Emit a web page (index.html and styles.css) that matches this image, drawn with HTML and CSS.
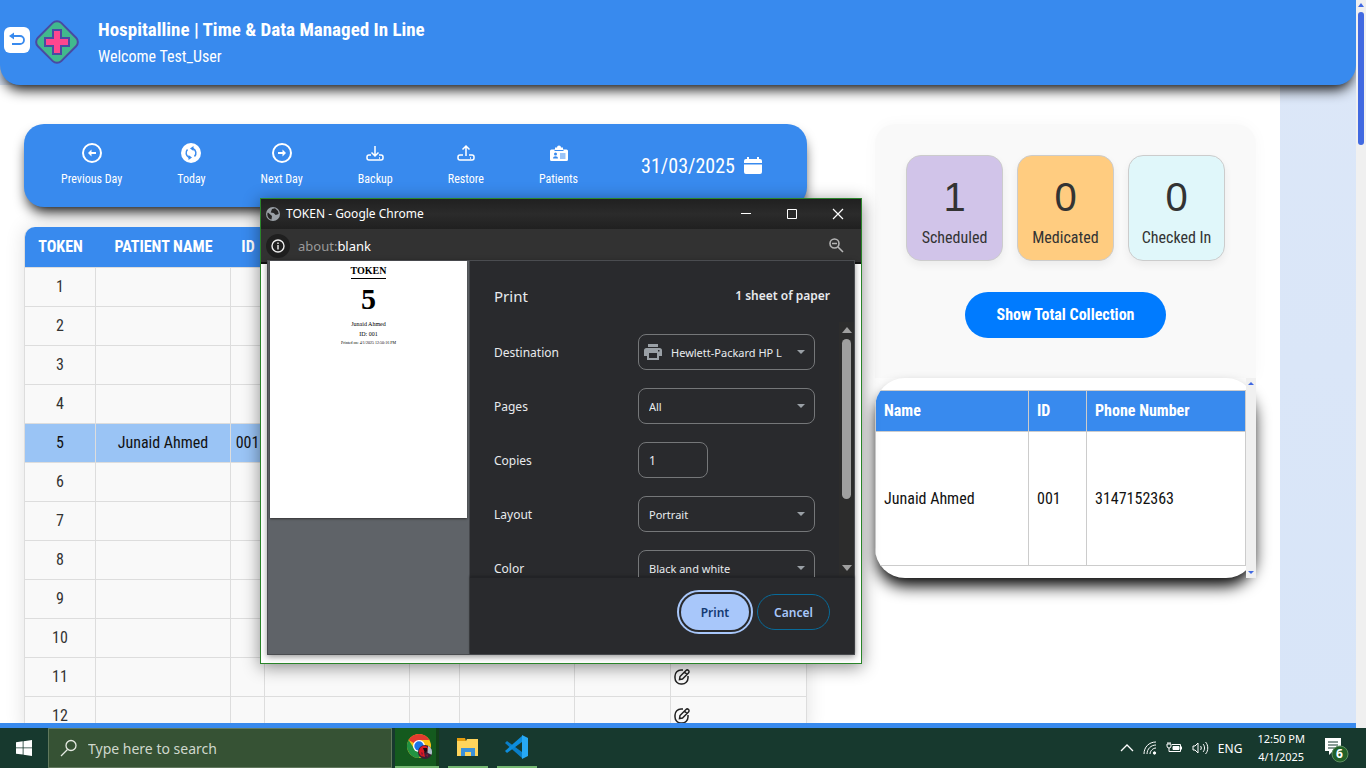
FILE: index.html
```html
<!DOCTYPE html>
<html lang="en">
<head>
<meta charset="utf-8">
<title>Hospitalline</title>
<link rel="stylesheet" href="styles.css">
</head>
<body>
<div class="screen">
  <div class="viewport">
    <div class="page">
      <header class="header">
        <button class="back" type="button" aria-label="Back">
          <svg width="26" height="26" viewBox="0 0 26 26" fill="none" stroke="#388aee" stroke-width="1.800"><path d="M9 9h7a4 4 0 0 1 0 8H8"/><path d="M10 5.500 5 9l5 3.500z" fill="#388aee" stroke="none"/></svg>
        </button>
        <svg class="logo" width="46" height="46" viewBox="0 0 46 46"><rect x="6.500" y="6.500" width="33" height="33" rx="6" transform="rotate(45 23 23)" fill="#41b98d" stroke="#494aa3" stroke-width="2"/><path d="M19 11h8v8h8v8h-8v8h-8v-8h-8v-8h8z" fill="#ff468f" stroke="#494aa3" stroke-width="2"/></svg>
        <div class="titles"><h1>Hospitalline | Time &amp; Data Managed In Line</h1><p>Welcome Test_User</p></div>
      </header>
      <main class="main">
        <section class="left">
          <nav class="toolbar">
            <button type="button"><svg width="24" height="24" viewBox="0 0 24 24" fill="none" stroke="#fff" stroke-width="2"><circle cx="12" cy="12" r="9"/><path d="M16 12H9"/><path d="M11.500 8.500 8 12l3.500 3.500z" fill="#fff" stroke="none"/></svg>Previous Day</button>
            <button type="button"><svg width="24" height="24" viewBox="0 0 24 24"><circle cx="12" cy="12" r="10" fill="#fff"/><path d="M10 16.500A5 5 0 0 1 8.500 8.500M14 7.500a5 5 0 0 1 1.500 8" fill="none" stroke="#388aee" stroke-width="1.500"/><path d="m14.500 5-3.500 2.500 3.500 2.500zM9.500 14l3.500 2.500L9.500 19z" fill="#388aee"/></svg>Today</button>
            <button type="button"><svg width="24" height="24" viewBox="0 0 24 24" fill="none" stroke="#fff" stroke-width="2"><circle cx="12" cy="12" r="9"/><path d="M8 12h7"/><path d="M12.500 8.500 16 12l-3.500 3.500z" fill="#fff" stroke="none"/></svg>Next Day</button>
            <button type="button"><svg width="24" height="24" viewBox="0 0 24 24" fill="none" stroke="#fff" stroke-width="1.500"><path d="M12 5v10M8.500 11.500 12 15l3.500-3.500M8 14H6a2 2 0 0 0-2 2v1a2 2 0 0 0 2 2h12a2 2 0 0 0 2-2v-1a2 2 0 0 0-2-2h-2M16 17h1"/></svg>Backup</button>
            <button type="button"><svg width="24" height="24" viewBox="0 0 24 24" fill="none" stroke="#fff" stroke-width="1.500"><path d="M12 15V5M8.500 8.500 12 5l3.500 3.500M9 14H6a2 2 0 0 0-2 2v1a2 2 0 0 0 2 2h12a2 2 0 0 0 2-2v-1a2 2 0 0 0-2-2h-3M16 17h1"/></svg>Restore</button>
            <button type="button"><svg width="24" height="24" viewBox="0 0 24 24"><path d="M4.500 8.500H8V10h8V8.500h3.500A1.500 1.500 0 0 1 21 10v8.500a1.500 1.500 0 0 1-1.500 1.500h-15A1.500 1.500 0 0 1 3 18.500V10a1.500 1.500 0 0 1 1.500-1.500zM10 6.500a2 2 0 0 1 4 0h2V9H8V6.500z" fill="#fff"/><path d="M7.500 9.500h9" stroke="#388aee"/><circle cx="8.500" cy="13" r="1.500" fill="#388aee"/><path d="M6 17.500c0-3 5-3 5 0z" fill="#388aee"/><path d="M13 13h5.500M13 15h5.500M13 17h5.500" stroke="#388aee"/></svg>Patients</button>
            <button class="date" type="button">31/03/2025<svg width="18" height="18" viewBox="0 0 18 18" fill="#fff"><path d="M3 2V0h2v2h8V0h2v2h1a2 2 0 0 1 2 2v2H0V4a2 2 0 0 1 2-2zM0 7.500h18V15a2 2 0 0 1-2 2H2a2 2 0 0 1-2-2z"/></svg></button>
          </nav>
          <table class="tokens">
            <colgroup><col class="c1"><col class="c2"><col class="c3"><col class="c4"><col class="c5"><col class="c6"><col class="c7"><col class="c8"></colgroup>
            <thead><tr><th>TOKEN</th><th>PATIENT NAME</th><th>ID</th><th></th><th></th><th></th><th></th><th></th></tr></thead>
            <tbody id="rows"></tbody>
          </table>
        </section>
        <aside class="right">
          <div class="summary">
            <div class="stats">
              <div class="stat purple"><b>1</b><span>Scheduled</span></div>
              <div class="stat orange"><b>0</b><span>Medicated</span></div>
              <div class="stat cyan"><b>0</b><span>Checked In</span></div>
            </div>
            <button class="collect" type="button">Show Total Collection</button>
          </div>
          <div class="found-wrap">
            <div class="found">
              <table>
                <thead><tr><th class="f1">Name</th><th class="f2">ID</th><th>Phone Number</th></tr></thead>
                <tbody><tr><td>Junaid Ahmed</td><td>001</td><td>3147152363</td></tr></tbody>
              </table>
            </div>
            <div class="mini-scroll"><i class="up"></i><i class="down"></i></div>
          </div>
        </aside>
      </main>
      <div class="footer"></div>
    </div>
    <div class="scroll"><i class="up"></i><div class="thumb"></div></div>
  </div>

  <div class="taskbar">
    <button class="start" type="button" aria-label="Start"><svg width="16" height="16" viewBox="0 0 16 16" fill="#fff"><path d="M0 2.300 6.700 1.300v6.200H0zM7.500 1.200 16 0v7.500H7.500zM0 8.300h6.700v6.300L0 13.700zM7.500 8.300H16V16l-8.500-1.200z"/></svg></button>
    <label class="search"><svg width="18" height="18" viewBox="0 0 18 18" fill="none" stroke="#e5eae2" stroke-width="1.300"><circle cx="11" cy="6.500" r="5"/><path d="m7.500 10.500-6.500 6.500"/></svg><input type="text" placeholder="Type here to search" aria-label="Search"></label>
    <button class="app active" type="button" aria-label="Chrome"><svg width="28" height="28" viewBox="0 0 28 28"><circle cx="13" cy="13" r="12" fill="#fbc116"/><path d="M13 13 2.600 7A12 12 0 0 1 23.400 7H13z" fill="#e33b2e"/><path d="M2.600 7A12 12 0 0 0 13 25l5-9-9 1z" fill="#229342"/><circle cx="13" cy="13" r="6" fill="#fff"/><circle cx="13" cy="13" r="4.700" fill="#1a73e8"/><circle cx="19" cy="19" r="7" fill="#3b1f35"/><path d="M22 12.800a7 7 0 0 1 3.500 9l-4-2z" fill="#aebfca"/><path d="M13 20c-1-6 6-10 9-5l-1 3-3 1 1 5-4-1z" fill="#d81a24"/><path d="M17 15h4v3l-2 2z" fill="#180d12"/><path d="m15 19 2 1-1 3zM19 22l3-1v3z" fill="#7b1736"/></svg></button>
    <button class="app" type="button" aria-label="File Explorer"><svg width="24" height="24" viewBox="0 0 24 24"><path d="M1 3h8l1 3H1z" fill="#e59c0e"/><path d="M1 6h9l1-2h11v17H1z" fill="#ffd45c"/><path d="M5 13h14v8h-4v-4H9v4H5z" fill="#3c91d9"/></svg></button>
    <button class="app" type="button" aria-label="Visual Studio Code"><svg width="24" height="24" viewBox="0 0 24 24"><path d="M2 6 0 8l17 15v-6z" fill="#0a7fc9"/><path d="M2 18 0 16 17 1v6z" fill="#0d8ddd"/><path d="m17 0 6 3v18l-6 3z" fill="#27a9f5"/></svg></button>
    <div class="tray">
      <svg width="14" height="8" viewBox="0 0 14 8" fill="none" stroke="#fff" stroke-width="1.300"><path d="m1 7 6-6 6 6"/></svg>
      <svg width="14" height="14" viewBox="0 0 14 14" fill="none" stroke="#fff"><path d="M1 13C1 6 6 1 13 1M4 13c0-5 4-9 9-9M7 13c0-3 3-6 6-6"/><circle cx="11.500" cy="12" r="1.200" fill="#fff"/></svg>
      <svg width="17" height="12" viewBox="0 0 17 12" fill="none" stroke="#fff"><path d="M6 2.500h8.500v7H5M15.500 4.500v3M1 2h4v2a2 2 0 0 1-4 0zM2 2V0M4 2V0M3 6v3.500h3"/><path d="M7 4.500h6v3H7z" fill="#fff"/></svg>
      <svg width="17" height="14" viewBox="0 0 17 14" fill="none" stroke="#fff"><path d="M1 5h2l3-3v10L3 9H1zM8.500 5c1 1 1 3 0 4M11 3c2 2 2 6 0 8M13.500 1c3 3 3 9 0 12"/></svg>
      <span class="lang">ENG</span>
      <span class="clock">12:50 PM<br>4/1/2025</span>
      <span class="notes"><svg width="26" height="26" viewBox="0 0 26 26"><path d="M1 1h16v13H9l-4 4v-4H1z" fill="#fff"/><path d="M4 5h10M4 8h10M4 11h7" stroke="#17392e"/><circle cx="16" cy="17" r="8" fill="#226127" stroke="#5e8d62"/></svg><b>6</b></span>
    </div>
  </div>

  <div class="window">
    <div class="titlebar">
      <svg width="14" height="14" viewBox="0 0 14 14"><circle cx="7" cy="7" r="7" fill="#9aa0a6"/><path d="M2 5.500 6 9l-.5 3.500C2.500 12 .8 9 1.500 6zM6 2l3-.7 3 2.700.7 3-3 1-2-2-3-.5z" fill="#252525"/></svg>
      <span>TOKEN - Google Chrome</span>
      <button type="button" aria-label="Minimize"><svg width="12" height="12" viewBox="0 0 12 12"><path d="M1 5.500h10" stroke="#fff"/></svg></button>
      <button type="button" aria-label="Maximize"><svg width="12" height="12" viewBox="0 0 12 12"><path d="M1.500 1.500h9v9h-9z" fill="none" stroke="#fff"/></svg></button>
      <button type="button" aria-label="Close"><svg width="12" height="12" viewBox="0 0 12 12"><path d="m1 1 10 10M11 1 1 11" stroke="#fff" stroke-width="1.200"/></svg></button>
    </div>
    <div class="address">
      <span class="info"><svg width="14" height="14" viewBox="0 0 14 14" fill="none" stroke="#eee" stroke-width="1.400"><circle cx="7" cy="7" r="6"/><path d="M7 6v4.500M7 3.500v1.400"/></svg></span>
      <span class="url"><i>about:</i>blank</span>
      <svg width="15" height="15" viewBox="0 0 15 15" fill="none" stroke="#b5b5b5" stroke-width="1.600"><circle cx="5.500" cy="5.500" r="4.500"/><path d="M3 5.500h5M9 9l5 5"/></svg>
    </div>
    <div class="dialog">
      <div class="preview">
        <div class="sheet"><h2>TOKEN</h2><strong>5</strong><p>Junaid Ahmed</p><p>ID: 001</p><small>Printed on: 4/1/2025 12:50:16 PM</small></div>
      </div>
      <form class="settings">
        <div class="set-head"><span>Print</span><b>1 sheet of paper</b></div>
        <div class="set-body">
          <div class="fields">
            <div class="row"><label for="dest">Destination</label><span class="field"><svg class="printer" width="18" height="16" viewBox="0 0 18 16"><path d="M4 0h10v3H4zM2.500 4h13A2.500 2.500 0 0 1 18 6.500V12h-3v4H3v-4H0V6.500A2.500 2.500 0 0 1 2.500 4zM5 9v5h8V9zM14 6v1.500h1.500V6z" fill="#9aa0a6" fill-rule="evenodd"/></svg><select id="dest" class="withicon"><option>Hewlett-Packard HP LaserJet</option></select></span></div>
            <div class="row"><label for="pages">Pages</label><span class="field"><select id="pages"><option>All</option></select></span></div>
            <div class="row"><label for="copies">Copies</label><input id="copies" type="text" value="1"></div>
            <div class="row"><label for="layout">Layout</label><span class="field"><select id="layout"><option>Portrait</option></select></span></div>
            <div class="row"><label for="color">Color</label><span class="field"><select id="color"><option>Black and white</option></select></span></div>
          </div>
          <div class="set-scroll"><i class="up"></i><div class="thumb"></div><i class="down"></i></div>
        </div>
        <div class="actions"><button class="print" type="button">Print</button><button class="cancel" type="button">Cancel</button></div>
      </form>
    </div>
  </div>
</div>
<script src="app.js"></script>
</body>
</html>
```
FILE: styles.css
```css
* { box-sizing: border-box; }
body { margin: 0; font-family: "Roboto Condensed", "Liberation Sans Narrow", Roboto, sans-serif; font-size: 16px; color: #333; }
button, input, select { font: inherit; color: inherit; margin: 0; }
button { border: 0; padding: 0; background: none; }
h1, h2, p { margin: 0; }
svg { display: block; flex: none; }
.screen { position: relative; display: flex; flex-direction: column; height: 100vh; overflow: hidden; }
.viewport { flex: 1; min-height: 0; display: flex; }
.page { flex: 1; min-width: 0; display: flex; flex-direction: column; background: linear-gradient(#dce7f8, #d8e5f8); }
.up, .down { display: block; width: 0; height: 0; border: 4px solid transparent; }
.up { border-top: 0; border-bottom-color: #4169e1; }
.down { border-bottom: 0; border-top-color: #4169e1; }
.scroll { position: relative; width: 10px; background: #f0f0f0; display: flex; flex-direction: column; align-items: center; gap: 5px; padding-top: 3px; }
.scroll .up { border-width: 0 3px 4px; }
.scroll .thumb { width: 6px; height: 133px; border-radius: 3px; background: #4169e1; }

.header { flex: none; height: 85px; background: #388aee; border-radius: 0 0 20px 20px; box-shadow: 0 8px 14px -4px #000; display: flex; align-items: center; padding: 0 4px; color: #fff; position: relative; }
.back { width: 26px; height: 26px; border-radius: 6px; background: #fff; margin-bottom: 5px; }
.logo { margin-left: 4px; margin-bottom: 1px; }
.titles { margin-left: 18px; }
.titles h1 { font-size: 19px; line-height: 28px; font-weight: 700; }
.titles p { line-height: 26px; }

.main { flex: 1; min-height: 0; overflow: hidden; max-width: 1280px; background: #fff; padding: 39px 24px 0; display: grid; grid-template-columns: minmax(0, 783fr) minmax(0, 381fr); gap: 68px; }
.footer { flex: none; height: 5px; background: #388aee; position: relative; }
.toolbar { height: 83px; border-radius: 20px; background: #388aee; box-shadow: 0 8px 14px -4px #000; color: #fff; display: flex; align-items: center; justify-content: space-between; padding: 0 45px 2px 37px; font-size: 12px; position: relative; }
.toolbar button { display: flex; flex-direction: column; align-items: center; gap: 5px; line-height: 18px; }
.toolbar .date { flex-direction: row; font-size: 20px; gap: 9px; margin-left: 8px; padding-top: 2px; }

.left { min-width: 0; }
.tokens { width: 100%; margin-top: 20px; table-layout: fixed; border-spacing: 0; border-left: 1px solid #ddd; box-shadow: 0 0 20px rgba(0,0,0,.12); border-radius: 10px; background: #f9f9f9; text-align: center; }
.tokens th { height: 40px; padding: 0 0 2px; background: #388aee; color: #fff; white-space: nowrap; }
.tokens th:first-child { border-radius: 10px 0 0; }
.tokens td { height: 39px; padding: 0 0 2px; border-right: 1px solid #ddd; border-top: 1px solid #ddd; white-space: nowrap; }
.tokens .active td { background: #9ac4f5; color: #111; }
.tokens td:last-child { padding: 0 3px; }
.c1 { width: 71px; } .c2 { width: 135px; } .c3 { width: 34px; } .c4 { width: 145px; } .c5 { width: 50px; } .c6 { width: 115px; } .c7 { width: 96px; }

.summary { height: 254px; background: #f9f9f9; border-radius: 20px 20px 0 0; box-shadow: 0 0 15px rgba(0,0,0,.03); display: flex; flex-direction: column; align-items: center; padding-top: 31px; }
.stats { display: flex; gap: 14px; }
.stat { width: 97px; height: 106px; border: 1px solid #ccc; border-radius: 15px; box-shadow: 0 4px 8px rgba(0,0,0,.06); display: flex; flex-direction: column; align-items: center; padding-top: 17px; }
.stat b { font-family: "Liberation Sans", sans-serif; font-size: 40px; line-height: 48px; font-weight: 400; }
.stat span { line-height: 34px; }
.purple { background: #d1c4e9; } .orange { background: #ffcc80; } .cyan { background: #e0f7fa; }
.collect { margin-top: 31px; width: 201px; height: 46px; padding-bottom: 2px; border-radius: 23px; background: #007bff; color: #fff; font-weight: 700; }
.found-wrap { position: relative; }
.found { height: 200px; border-radius: 30px; background: #fff; box-shadow: 0 10px 16px -2px #000; overflow: hidden; padding: 12px 10px 12px 0; }
.found table { width: 100%; height: 176px; border-collapse: collapse; text-align: left; color: #111; }
.found th { height: 41px; background: #388aee; color: #fff; }
.found th, .found td { border: 1px solid #ccc; padding: 0 8px; }
.found th { padding-bottom: 2px; }
.f1 { width: 153px; } .f2 { width: 58px; }
.mini-scroll { position: absolute; top: 0; right: 0; bottom: 0; width: 10px; background: #f0f0f0; display: flex; flex-direction: column; justify-content: space-between; align-items: center; padding: 4px 0; }
.mini-scroll .up { border-width: 0 3px 3px; } .mini-scroll .down { border-width: 3px 3px 0; }

.taskbar { flex: none; height: 40px; background: #17392e; display: flex; font-family: "Noto Sans", sans-serif; color: #fff; }
.start { width: 48px; display: grid; place-items: center; }
.search { width: 344px; border: 1px solid #60785c; background: #365234; display: flex; align-items: center; gap: 8px; padding-left: 11px; margin-right: 3px; }
.search input { flex: 1; min-width: 0; border: 0; background: none; outline: 0; font-size: 14px; }
.search input::placeholder { color: #cfd8cd; opacity: 1; }
.app { width: 40px; margin-right: 9px; border-bottom: 2px solid #75b872; display: grid; place-items: center; }
.app.active { width: 44px; background: #145a1e; box-shadow: inset -3px 0 #123f19; padding-left: 6px; }
.tray { margin-left: auto; display: flex; align-items: center; gap: 9px; font-size: 12px; padding-right: 16px; }
.clock { text-align: center; line-height: 18px; font-size: 11px; margin-left: 6px; }
.notes { position: relative; margin-left: 10px; padding-top: 4px; }
.notes b { position: absolute; left: 12px; top: 13px; font-size: 12px; line-height: 16px; }

.window { position: absolute; left: 260px; top: 198px; width: 602px; height: 466px; border: 1px solid #2a852a; background: #fff; box-shadow: 0 3px 16px rgba(0,0,0,.45); font-family: "Noto Sans", sans-serif; font-size: 12px; color: #e8eaed; display: flex; flex-direction: column; }
.titlebar { flex: none; height: 30px; background: linear-gradient(#202020, #2b2b2b 50%, #202020); display: flex; align-items: center; padding: 0 0 1px 5px; color: #fff; }
.titlebar span { flex: 1; margin-left: 6px; }
.titlebar button { width: 46px; height: 30px; display: grid; place-items: center; }
.address { flex: none; height: 35px; background: #323232; border-bottom: 2px solid #111; display: flex; align-items: center; padding: 0 17px 0 5px; }
.info { width: 24px; height: 24px; border-radius: 50%; background: #1f1f1f; display: grid; place-items: center; }
.url { flex: 1; margin-left: 8px; font-size: 13px; color: #fff; }
.url i { font-style: normal; color: #9a9a9a; }
.dialog { flex: 1; min-height: 0; margin: -4px 6px 8px; border: 1px solid #4a4c50; background: #292a2d; display: flex; box-shadow: 0 2px 6px rgba(0,0,0,.4); }
.preview { width: 202px; background: #5f6368; border-right: 1px solid #45474b; padding: 0 2px; }
.sheet { height: 257px; background: #fff; box-shadow: 0 1px 2px #333; font-family: "Liberation Serif", serif; color: #000; display: flex; flex-direction: column; align-items: center; padding-top: 3px; }
.sheet h2 { font-size: 10px; line-height: 14px; border-bottom: 1px solid #000; }
.sheet strong { font-size: 30px; line-height: 40px; }
.sheet p { font-size: 6px; line-height: 10px; }
.sheet small { font-size: 4px; line-height: 8px; }
.settings { flex: 1; min-width: 0; display: flex; flex-direction: column; }
.set-head { flex: none; height: 61px; display: flex; justify-content: space-between; align-items: center; padding: 8px 24px 0; font-size: 15px; }
.set-head b { font-size: 12px; font-weight: 600; }
.set-body { flex: 1; min-height: 0; overflow: hidden; display: flex; }
.fields { flex: 1; min-width: 0; padding: 12px 20px 0 24px; display: flex; flex-direction: column; gap: 18px; }
.row { display: flex; flex: none; height: 36px; }
.row label { flex: none; width: 144px; line-height: 38px; }
.field { position: relative; flex: none; width: 177px; }
.field::after { content: ""; position: absolute; right: 10px; top: 16px; border: 4px solid transparent; border-top-color: #9aa0a6; border-bottom: 0; }
.printer { position: absolute; left: 6px; top: 10px; }
.field select, .row input { appearance: none; width: 100%; height: 36px; border: 1px solid #757779; border-radius: 8px; background: none; color: #e8eaed; padding: 0 32px 0 10px; font-size: 11px; outline: 0; overflow: hidden; }
.field .withicon { padding-left: 32px; }
.row input { width: 70px; font-size: 12px; }
.set-scroll { flex: none; width: 15px; background: #2c2c2c; display: flex; flex-direction: column; align-items: center; padding: 5px 0 6px; gap: 6px; }
.set-scroll .up { border-width: 0 5px 6px; border-bottom-color: #9f9f9f; }
.set-scroll .down { border-width: 6px 5px 0; border-top-color: #9f9f9f; margin-top: auto; }
.set-scroll .thumb { width: 9px; height: 160px; border-radius: 5px; background: #9f9f9f; }
.actions { flex: none; height: 77px; display: flex; justify-content: flex-end; gap: 8px; padding: 16px 24px; border-top: 1px solid #222326; box-shadow: 0 -1px 2px #202124; font-weight: 600; }
.actions button { height: 36px; border-radius: 18px; }
.print { width: 68px; background: #a8c7fa; color: #143a72; outline: 2px solid #a8c7fa; outline-offset: 2px; }
.actions .cancel { width: 73px; border: 1px solid #086a99; color: #a8c7fa; }
```
FILE: app.js
```js
const edit = '<svg width="16" height="16" viewBox="0 0 16 16" fill="none" stroke="#222" stroke-width="1.500"><path d="M9 1H7a6 6 0 0 0-6 6v2a6 6 0 0 0 6 6h1a6 6 0 0 0 6-6V7M6 7.500 12 1.500a1.500 1.500 0 0 1 2.500 2.500L8.500 10l-3 .5zM10.500 3l2.500 2.500"/></svg>';
const body = document.getElementById("rows");
for (let n = 1; n <= 12; n++) {
  const row = document.createElement("tr");
  const active = n === 5;
  if (active) row.className = "active";
  row.innerHTML = `<td>${n}</td><td>${active ? "Junaid Ahmed" : ""}</td><td>${active ? "001" : ""}</td><td></td><td></td><td></td><td></td><td>${edit}</td>`;
  body.append(row);
}
```
